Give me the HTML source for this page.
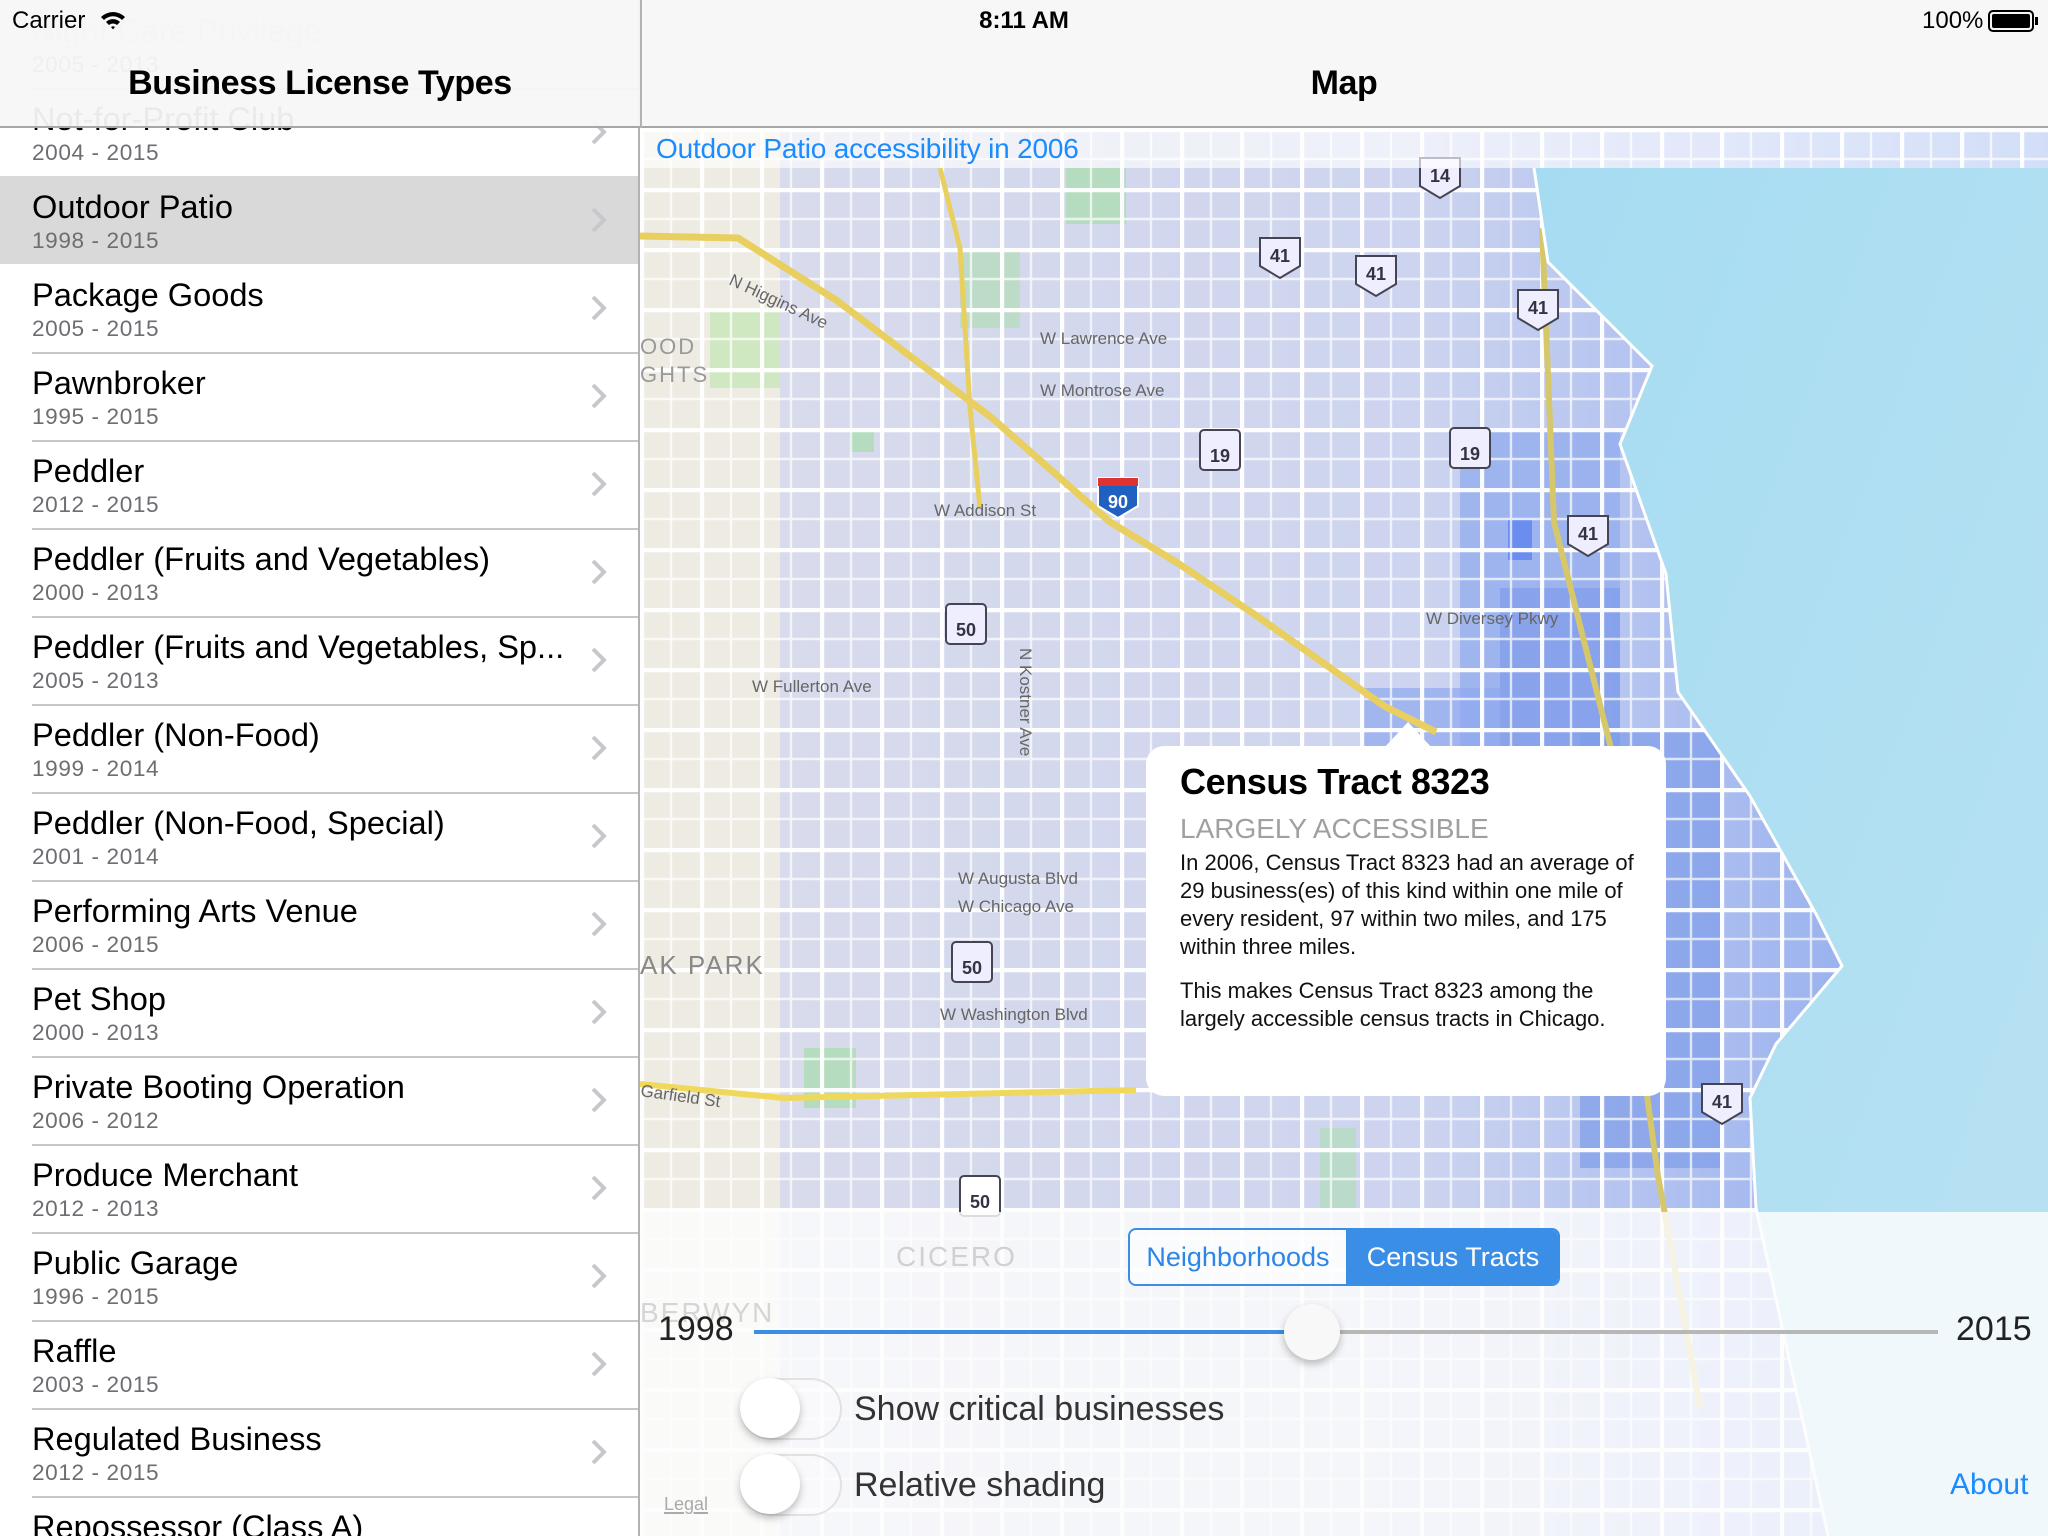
<!DOCTYPE html>
<html><head><meta charset="utf-8">
<style>
*{margin:0;padding:0;box-sizing:border-box}
html,body{width:2048px;height:1536px;overflow:hidden;background:#fff}
#root{width:1024px;height:768px;transform:scale(2);transform-origin:0 0;position:relative;font-family:"Liberation Sans",sans-serif;overflow:hidden}
#side{position:absolute;left:0;top:0;width:320px;height:768px;background:#fff;border-right:0.5px solid #b2b2b2;overflow:hidden}
.row{position:absolute;left:0;width:320px;height:44px}
.row .t{position:absolute;left:16px;top:7px;font-size:16.3px;color:#000;white-space:nowrap}
.row .s{position:absolute;left:16px;top:27px;font-size:11.3px;color:#6d6d72;letter-spacing:0.3px}
.row .sep{position:absolute;left:16px;right:0;bottom:0;height:0.5px;background:#c8c7cc}
.row .ch{position:absolute;left:295px;top:15px;width:9px;height:14px}
.sel{background:#d9d9d9}
.sel .sep{left:0}
#nav{position:absolute;left:0;top:0;width:1024px;height:64px;background:rgba(247,247,247,0.95);border-bottom:0.5px solid #a7a7aa}
#nav .vl{position:absolute;left:320px;top:0;width:0.5px;height:64px;background:#b2b2b2}
.title{position:absolute;top:32px;font-size:17px;font-weight:bold;color:#000;text-align:center;letter-spacing:-0.2px}
.sb{position:absolute;top:3px;font-size:12px;color:#000}
#map{position:absolute;left:320px;top:64px;width:704px;height:704px;overflow:hidden}
#banner{position:absolute;left:320px;top:64px;width:704px;height:20px;background:rgba(255,255,255,0.65)}
#banner span{position:absolute;left:8px;top:2px;font-size:14px;color:#1a8cff;letter-spacing:-0.1px}
#panel{position:absolute;left:320px;top:606px;width:704px;height:162px;background:rgba(252,252,252,0.82)}
.pop{position:absolute;left:573px;top:373px;width:260px;height:175px;background:#fff;border-radius:9px}
.pop .h{position:absolute;left:17px;top:8px;font-size:18px;font-weight:bold;color:#000;letter-spacing:-0.2px}
.pop .g{position:absolute;left:17px;top:33px;font-size:14px;color:#a0a0a0}
.pop .b{position:absolute;left:17px;top:52px;width:236px;font-size:11px;line-height:14px;color:#111}
.seg{position:absolute;left:564px;top:614px;width:216px;height:29px;border:1px solid #3a8ee6;border-radius:4px;overflow:hidden;font-size:13.5px}
.seg div{position:absolute;top:0;height:27px;line-height:27px;text-align:center}
.sw{position:absolute;left:370px;width:51px;height:31px;border-radius:16px;border:1.5px solid rgba(220,220,220,0.8);background:rgba(255,255,255,0.3)}
.sw i{position:absolute;left:-1px;top:-1px;width:30px;height:30px;border-radius:50%;background:#fff;box-shadow:0 2px 4px rgba(0,0,0,0.25)}
.lbl{position:absolute;left:427px;font-size:17px;color:#333}
</style></head><body><div id="root">

<div id="side">
<div class="row" style="top:0"><div class="t" style="color:#ccc">Night Care Privilege</div><div class="s">2005 - 2013</div><div class="sep"></div></div>
<div class="row" style="top:44px"><div class="t">Not-for-Profit Club</div><div class="s">2004 - 2015</div><div class="sep"></div><svg class="ch" viewBox="0 0 9 14"><path d="M1.5 1.5L7 7L1.5 12.5" fill="none" stroke="#c7c7cc" stroke-width="2"/></svg></div>
<div class="row sel" style="top:88px"><div class="t">Outdoor Patio</div><div class="s">1998 - 2015</div><svg class="ch" viewBox="0 0 9 14"><path d="M1.5 1.5L7 7L1.5 12.5" fill="none" stroke="#c7c7cc" stroke-width="2"/></svg></div>
<div class="row" style="top:132px"><div class="t">Package Goods</div><div class="s">2005 - 2015</div><div class="sep"></div><svg class="ch" viewBox="0 0 9 14"><path d="M1.5 1.5L7 7L1.5 12.5" fill="none" stroke="#c7c7cc" stroke-width="2"/></svg></div>
<div class="row" style="top:176px"><div class="t">Pawnbroker</div><div class="s">1995 - 2015</div><div class="sep"></div><svg class="ch" viewBox="0 0 9 14"><path d="M1.5 1.5L7 7L1.5 12.5" fill="none" stroke="#c7c7cc" stroke-width="2"/></svg></div>
<div class="row" style="top:220px"><div class="t">Peddler</div><div class="s">2012 - 2015</div><div class="sep"></div><svg class="ch" viewBox="0 0 9 14"><path d="M1.5 1.5L7 7L1.5 12.5" fill="none" stroke="#c7c7cc" stroke-width="2"/></svg></div>
<div class="row" style="top:264px"><div class="t">Peddler (Fruits and Vegetables)</div><div class="s">2000 - 2013</div><div class="sep"></div><svg class="ch" viewBox="0 0 9 14"><path d="M1.5 1.5L7 7L1.5 12.5" fill="none" stroke="#c7c7cc" stroke-width="2"/></svg></div>
<div class="row" style="top:308px"><div class="t">Peddler (Fruits and Vegetables, Sp...</div><div class="s">2005 - 2013</div><div class="sep"></div><svg class="ch" viewBox="0 0 9 14"><path d="M1.5 1.5L7 7L1.5 12.5" fill="none" stroke="#c7c7cc" stroke-width="2"/></svg></div>
<div class="row" style="top:352px"><div class="t">Peddler (Non-Food)</div><div class="s">1999 - 2014</div><div class="sep"></div><svg class="ch" viewBox="0 0 9 14"><path d="M1.5 1.5L7 7L1.5 12.5" fill="none" stroke="#c7c7cc" stroke-width="2"/></svg></div>
<div class="row" style="top:396px"><div class="t">Peddler (Non-Food, Special)</div><div class="s">2001 - 2014</div><div class="sep"></div><svg class="ch" viewBox="0 0 9 14"><path d="M1.5 1.5L7 7L1.5 12.5" fill="none" stroke="#c7c7cc" stroke-width="2"/></svg></div>
<div class="row" style="top:440px"><div class="t">Performing Arts Venue</div><div class="s">2006 - 2015</div><div class="sep"></div><svg class="ch" viewBox="0 0 9 14"><path d="M1.5 1.5L7 7L1.5 12.5" fill="none" stroke="#c7c7cc" stroke-width="2"/></svg></div>
<div class="row" style="top:484px"><div class="t">Pet Shop</div><div class="s">2000 - 2013</div><div class="sep"></div><svg class="ch" viewBox="0 0 9 14"><path d="M1.5 1.5L7 7L1.5 12.5" fill="none" stroke="#c7c7cc" stroke-width="2"/></svg></div>
<div class="row" style="top:528px"><div class="t">Private Booting Operation</div><div class="s">2006 - 2012</div><div class="sep"></div><svg class="ch" viewBox="0 0 9 14"><path d="M1.5 1.5L7 7L1.5 12.5" fill="none" stroke="#c7c7cc" stroke-width="2"/></svg></div>
<div class="row" style="top:572px"><div class="t">Produce Merchant</div><div class="s">2012 - 2013</div><div class="sep"></div><svg class="ch" viewBox="0 0 9 14"><path d="M1.5 1.5L7 7L1.5 12.5" fill="none" stroke="#c7c7cc" stroke-width="2"/></svg></div>
<div class="row" style="top:616px"><div class="t">Public Garage</div><div class="s">1996 - 2015</div><div class="sep"></div><svg class="ch" viewBox="0 0 9 14"><path d="M1.5 1.5L7 7L1.5 12.5" fill="none" stroke="#c7c7cc" stroke-width="2"/></svg></div>
<div class="row" style="top:660px"><div class="t">Raffle</div><div class="s">2003 - 2015</div><div class="sep"></div><svg class="ch" viewBox="0 0 9 14"><path d="M1.5 1.5L7 7L1.5 12.5" fill="none" stroke="#c7c7cc" stroke-width="2"/></svg></div>
<div class="row" style="top:704px"><div class="t">Regulated Business</div><div class="s">2012 - 2015</div><div class="sep"></div><svg class="ch" viewBox="0 0 9 14"><path d="M1.5 1.5L7 7L1.5 12.5" fill="none" stroke="#c7c7cc" stroke-width="2"/></svg></div>
<div class="row" style="top:748px"><div class="t">Repossessor (Class A)</div><div class="s">2012 - 2015</div><div class="sep"></div></div>
</div>

<svg id="map" viewBox="0 0 704 704" xmlns="http://www.w3.org/2000/svg">
<defs>
<pattern id="grid" width="30" height="30" patternUnits="userSpaceOnUse">
<path d="M0 1H30M1 0V30" stroke="#fff" stroke-width="2.2" opacity="0.95"/>
<path d="M0 15.5H30M15.5 0V30" stroke="#fff" stroke-width="1.2" opacity="0.7"/>
</pattern>
<linearGradient id="tint" x1="0" y1="0" x2="1" y2="0">
<stop offset="0" stop-color="#d8dbeb"/>
<stop offset="0.5" stop-color="#cdd4ef"/>
<stop offset="0.75" stop-color="#a9bcf0"/>
<stop offset="1" stop-color="#7fa0ea"/>
</linearGradient>
<linearGradient id="water" x1="0" y1="0" x2="1" y2="1">
<stop offset="0" stop-color="#a6dcf2"/>
<stop offset="1" stop-color="#b9e2f3"/>
</linearGradient>
</defs>
<rect width="704" height="704" fill="#eeebe3"/>
<rect x="70" y="0" width="634" height="704" fill="url(#tint)"/>
<rect x="410" y="150" width="80" height="210" fill="#8fa9ee" opacity="0.7"/>
<rect x="430" y="230" width="60" height="90" fill="#7b98ea" opacity="0.6"/>
<rect x="434" y="196" width="12" height="20" fill="#6b8df0"/>
<rect x="360" y="280" width="70" height="90" fill="#8ea8ef" opacity="0.7"/>
<rect x="470" y="300" width="70" height="220" fill="#7f9de8" opacity="0.7"/>
<rect x="300" y="320" width="110" height="60" fill="#9db3ef" opacity="0.6"/>
<rect x="213" y="20" width="30" height="28" fill="#b5dcbf"/>
<rect x="160" y="60" width="30" height="40" fill="#b5dcbf" opacity="0.8"/>
<rect x="105" y="150" width="12" height="12" fill="#b5dcbf"/>
<rect x="35" y="90" width="35" height="40" fill="#cfe8c2"/>
<rect x="82" y="460" width="26" height="30" fill="#b5dcbf"/>
<rect x="340" y="500" width="18" height="40" fill="#b5dcbf" opacity="0.8"/>
<rect x="294" y="410" width="14" height="40" fill="#b5dcbf" opacity="0.7"/>
<rect width="704" height="704" fill="url(#grid)"/>
<path d="M0 54L49 55L98 86L176 145L235 197L268 217L307 243L372 289L398 302" fill="none" stroke="#e8cf5f" stroke-width="3.5"/>
<path d="M150 20L160 60L165 140L170 190" fill="none" stroke="#e8cf5f" stroke-width="2.5"/>
<path d="M451 50L457 197L490 328L500 458L509 524L530 640" fill="none" stroke="#d6c76a" stroke-width="3"/>
<path d="M0 478L72 485L248 481" fill="none" stroke="#f0d95a" stroke-width="3"/>
<path d="M447 20L454 67L506 119L490 158L513 223L519 282L555 334L588 393L601 419L568 458L555 485L558 540L594 704L704 704L704 20Z" fill="url(#water)"/>
<path d="M447 20L454 67L506 119L490 158L513 223L519 282L555 334L588 393L601 419L568 458L555 485L558 540L594 704" fill="none" stroke="#fff" stroke-width="1.5"/>
<g font-family="Liberation Sans,sans-serif" font-weight="bold" font-size="9" text-anchor="middle" fill="#334">
<g transform="translate(400,24)"><path d="M-10 -9H10V5L0 11L-10 5Z" fill="#eef" stroke="#445" stroke-width="1"/><text y="3">14</text></g>
<g transform="translate(320,64)"><path d="M-10 -9H10V5L0 11L-10 5Z" fill="#eef" stroke="#445" stroke-width="1"/><text y="3">41</text></g>
<g transform="translate(368,73)"><path d="M-10 -9H10V5L0 11L-10 5Z" fill="#eef" stroke="#445" stroke-width="1"/><text y="3">41</text></g>
<g transform="translate(449,90)"><path d="M-10 -9H10V5L0 11L-10 5Z" fill="#eef" stroke="#445" stroke-width="1"/><text y="3">41</text></g>
<g transform="translate(474,203)"><path d="M-10 -9H10V5L0 11L-10 5Z" fill="#eef" stroke="#445" stroke-width="1"/><text y="3">41</text></g>
<g transform="translate(541,487)"><path d="M-10 -9H10V5L0 11L-10 5Z" fill="#eef" stroke="#445" stroke-width="1"/><text y="3">41</text></g>
<g transform="translate(239,184)"><path d="M-10 -9H10V5L0 11L-10 5Z" fill="#2060c0" stroke="#fff" stroke-width="1"/><rect x="-10" y="-9" width="20" height="4" fill="#d33"/><text y="6" fill="#fff">90</text></g>
<g transform="translate(290,161)"><rect x="-10" y="-10" width="20" height="20" rx="2" fill="#eef" stroke="#445"/><text y="6">19</text></g>
<g transform="translate(415,160)"><rect x="-10" y="-10" width="20" height="20" rx="2" fill="#eef" stroke="#445"/><text y="6">19</text></g>
<g transform="translate(163,248)"><rect x="-10" y="-10" width="20" height="20" rx="2" fill="#eef" stroke="#445"/><text y="6">50</text></g>
<g transform="translate(166,417)"><rect x="-10" y="-10" width="20" height="20" rx="2" fill="#eef" stroke="#445"/><text y="6">50</text></g>
<g transform="translate(170,534)"><rect x="-10" y="-10" width="20" height="20" rx="2" fill="#fff" stroke="#445"/><text y="6">50</text></g>
</g>
<g font-family="Liberation Sans,sans-serif" font-size="8.5" fill="#666">
<text x="44" y="78" transform="rotate(25 44 78)">N Higgins Ave</text>
<text x="200" y="108">W Lawrence Ave</text>
<text x="200" y="134">W Montrose Ave</text>
<text x="147" y="194">W Addison St</text>
<text x="56" y="282">W Fullerton Ave</text>
<text x="159" y="378">W Augusta Blvd</text>
<text x="159" y="392">W Chicago Ave</text>
<text x="150" y="446">W Washington Blvd</text>
<text x="0" y="484" transform="rotate(8 0 484)">Garfield St</text>
<text x="393" y="248">W Diversey Pkwy</text>
<text x="190" y="260" transform="rotate(90 190 260)">N Kostner Ave</text>
<text x="0" y="113" font-size="11" fill="#999" letter-spacing="1">OOD</text>
<text x="0" y="127" font-size="11" fill="#999" letter-spacing="1">GHTS</text>
<text x="0" y="423" font-size="13" fill="#888" letter-spacing="1">AK PARK</text>
</g>
</svg>

<div id="banner"><span>Outdoor Patio accessibility in 2006</span></div>

<div id="panel">
<div style="position:absolute;left:128px;top:14px;font-size:14px;color:#d0d0d0;letter-spacing:1px">CICERO</div>
<div style="position:absolute;left:0;top:42px;font-size:14px;color:#d5d5d5;letter-spacing:1px">BERWYN</div>
</div>

<svg style="position:absolute;left:692px;top:361px" width="24" height="13"><path d="M0 13L12 0L24 13Z" fill="#fff"/></svg>
<div class="pop">
<div class="h">Census Tract 8323</div>
<div class="g">LARGELY ACCESSIBLE</div>
<div class="b">In 2006, Census Tract 8323 had an average of 29 business(es) of this kind within one mile of every resident, 97 within two miles, and 175 within three miles.<div style="height:8px"></div>This makes Census Tract 8323 among the largely accessible census tracts in Chicago.</div>
</div>

<div class="seg">
<div style="left:0;width:108px;color:#2b86e8;background:rgba(255,255,255,0.5)">Neighborhoods</div>
<div style="left:108px;width:107px;color:#fff;background:#3a8ee6">Census Tracts</div>
</div>

<div style="position:absolute;left:329px;top:655px;font-size:17px;color:#222">1998</div>
<div style="position:absolute;left:978px;top:655px;font-size:17px;color:#222">2015</div>
<div style="position:absolute;left:377px;top:665px;width:280px;height:2px;background:#3a8ee6"></div>
<div style="position:absolute;left:657px;top:665px;width:312px;height:2px;background:#b7b7b7"></div>
<div style="position:absolute;left:642px;top:652px;width:28px;height:28px;border-radius:50%;background:#f8f8f8;box-shadow:0 2px 4px rgba(0,0,0,0.25)"></div>

<div class="sw" style="top:689px"><i></i></div>
<div class="sw" style="top:727px"><i></i></div>
<div class="lbl" style="top:695px">Show critical businesses</div>
<div class="lbl" style="top:733px">Relative shading</div>
<div style="position:absolute;left:332px;top:747px;font-size:9px;color:#aaa;text-decoration:underline">Legal</div>
<div style="position:absolute;left:975px;top:734px;font-size:15px;color:#1a8cff">About</div>

<div id="nav"><div class="vl"></div>
<div class="title" style="left:0;width:320px">Business License Types</div>
<div class="title" style="left:320px;width:704px">Map</div>
<div class="sb" style="left:6px">Carrier</div>
<svg style="position:absolute;left:50px;top:5px" width="13" height="10" viewBox="0 0 13 10"><path d="M0.5 3.5A8.5 8.5 0 0 1 12.5 3.5L11 5A6.4 6.4 0 0 0 2 5Z M3 6A5 5 0 0 1 10 6L8.5 7.5A3 3 0 0 0 4.5 7.5Z M5.5 8.5A1.5 1.5 0 0 1 7.5 8.5L6.5 9.7Z" fill="#000"/></svg>
<div class="sb" style="left:0;width:1024px;text-align:center;font-weight:bold">8:11 AM</div>
<div class="sb" style="left:961px">100%</div>
<svg style="position:absolute;left:994px;top:5px" width="26" height="11" viewBox="0 0 26 11"><rect x="0.5" y="0.5" width="22" height="10" rx="2" fill="none" stroke="#000"/><rect x="2" y="2" width="19" height="7" rx="1" fill="#000"/><rect x="23.5" y="3.5" width="1.5" height="4" fill="#000"/></svg>
</div>

</div></body></html>
